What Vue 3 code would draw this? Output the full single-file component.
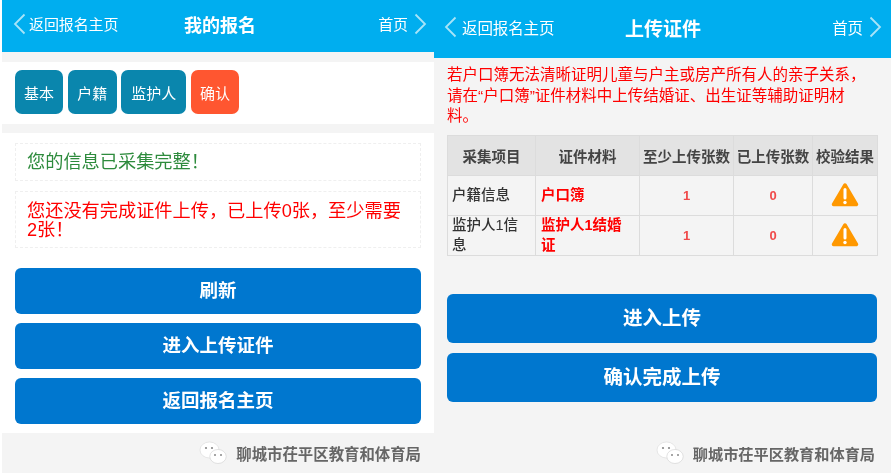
<script setup>
const tabs = [
  { label: '基本', w: 48 },
  { label: '户籍', w: 49 },
  { label: '监护人', w: 65 },
  { label: '确认', w: 48, active: true }
]
const rows = [
  { item: '户籍信息', doc: '户口簿', min: 1, done: 0 },
  { item: '监护人1信息', doc: '监护人1结婚证', min: 1, done: 0 }
]
</script>

<template>
  <div class="screen">
    <section class="panel left">
      <header class="bar bar-left">
        <div class="side">
          <svg class="chev" width="13" height="22" viewBox="0 0 13 22"><path d="M11.5 1.5 2 11l9.500 9.500" /></svg>
          <span>返回报名主页</span>
        </div>
        <h1>我的报名</h1>
        <div class="side end">
          <span>首页</span>
          <svg class="chev" width="13" height="22" viewBox="0 0 13 22"><path d="M1.500 1.500 11 11l-9.500 9.500" /></svg>
        </div>
      </header>

      <nav class="tabs">
        <span
          v-for="t in tabs"
          :key="t.label"
          class="tab"
          :class="{ active: t.active }"
          :style="{ width: t.w + 'px' }"
        >{{ t.label }}</span>
      </nav>

      <div class="content">
        <p class="note ok">您的信息已采集完整！</p>
        <p class="note warn">您还没有完成证件上传，已上传0张，至少需要2张！</p>
        <div class="actions">
          <button>刷新</button>
          <button>进入上传证件</button>
          <button>返回报名主页</button>
        </div>
      </div>

      <footer class="foot">
        <svg width="28" height="24" viewBox="0 0 28 24">
          <ellipse cx="10.500" cy="9" rx="9.500" ry="8" fill="#fff" stroke="#d8d8d8" stroke-width=".6" />
          <ellipse cx="19" cy="15.500" rx="8.200" ry="7" fill="#fff" stroke="#cfcfcf" stroke-width=".6" />
          <circle cx="7" cy="7" r="1.100" fill="#888" /><circle cx="13" cy="7" r="1.100" fill="#888" />
          <circle cx="16" cy="14" r="1" fill="#888" /><circle cx="22" cy="14" r="1" fill="#888" />
        </svg>
        <span>聊城市茌平区教育和体育局</span>
      </footer>
    </section>

    <section class="panel right">
      <header class="bar bar-right">
        <div class="side">
          <svg class="chev" width="13" height="22" viewBox="0 0 13 22"><path d="M11.500 1.500 2 11l9.500 9.500" /></svg>
          <span>返回报名主页</span>
        </div>
        <h1>上传证件</h1>
        <div class="side end">
          <span>首页</span>
          <svg class="chev" width="13" height="22" viewBox="0 0 13 22"><path d="M1.500 1.500 11 11l-9.500 9.500" /></svg>
        </div>
      </header>

      <p class="tip">若户口簿无法清晰证明儿童与户主或房产所有人的亲子关系，请在“户口簿”证件材料中上传结婚证、出生证等辅助证明材料。</p>

      <table>
        <colgroup>
          <col style="width:88px" /><col style="width:104px" /><col style="width:94px" /><col style="width:79px" /><col style="width:65px" />
        </colgroup>
        <thead>
          <tr><th>采集项目</th><th>证件材料</th><th>至少上传张数</th><th>已上传张数</th><th>校验结果</th></tr>
        </thead>
        <tbody>
          <tr v-for="r in rows" :key="r.item">
            <td class="item">{{ r.item }}</td>
            <td class="doc">{{ r.doc }}</td>
            <td class="num">{{ r.min }}</td>
            <td class="num">{{ r.done }}</td>
            <td class="icon">
              <svg width="28" height="26" viewBox="0 0 28 26">
                <path d="M14 3 25.500 22.500H2.500Z" fill="#ff9800" stroke="#ff9800" stroke-width="3.500" stroke-linejoin="round" />
                <path d="M14 7.500v8.500" stroke="#fff" stroke-width="3" stroke-linecap="round" />
                <circle cx="14" cy="20.500" r="1.700" fill="#fff" />
              </svg>
            </td>
          </tr>
        </tbody>
      </table>

      <div class="actions big">
        <button>进入上传</button>
        <button>确认完成上传</button>
      </div>

      <footer class="foot foot-right">
        <svg width="28" height="24" viewBox="0 0 28 24">
          <ellipse cx="10.500" cy="9" rx="9.500" ry="8" fill="#fff" stroke="#d8d8d8" stroke-width=".6" />
          <ellipse cx="19" cy="15.500" rx="8.200" ry="7" fill="#fff" stroke="#cfcfcf" stroke-width=".6" />
          <circle cx="7" cy="7" r="1.100" fill="#888" /><circle cx="13" cy="7" r="1.100" fill="#888" />
          <circle cx="16" cy="14" r="1" fill="#888" /><circle cx="22" cy="14" r="1" fill="#888" />
        </svg>
        <span>聊城市茌平区教育和体育局</span>
      </footer>
    </section>
  </div>
</template>

<style>
html, body { margin: 0; background: #fff; }
</style>

<style scoped>
.screen {
  width: 891px;
  height: 473px;
  display: flex;
  overflow: hidden;
  background: #fff;
  font-family: "Liberation Sans", "Noto Sans CJK SC", sans-serif;
  filter: blur(0.55px);
}
.panel {
  display: flex;
  flex-direction: column;
  background: #f4f4f4;
  height: 473px;
}
.left { width: 432px; margin-left: 2px; }
.right { width: 457px; }

.bar {
  display: grid;
  grid-template-columns: 1fr auto 1fr;
  align-items: center;
  background: #00aeef;
  color: #fff;
  flex: none;
  box-sizing: border-box;
}
.bar-left { height: 52px; padding: 0 7px 5px 11px; }
.bar-right { height: 58px; padding: 0 9px 4px 10px; }
.bar h1 { margin: 0; font-size: 18px; font-weight: 700; }
.bar-right h1 { font-size: 19px; }
.side { display: flex; align-items: center; gap: 3px; font-size: 15px; letter-spacing: -0.1px; }
.bar-right .side { font-size: 15.500px; gap: 5px; }
.side.end, .bar-right .side.end { justify-content: flex-end; gap: 6px; }
.chev path { fill: none; stroke: #a8e4f8; stroke-width: 1.800; }

.tabs {
  margin-top: 10px;
  height: 62px;
  padding: 8px 13px;
  box-sizing: border-box;
  background: #fff;
  display: flex;
  gap: 4.670px;
  flex: none;
}
.tab {
  height: 44px;
  border-radius: 7px;
  background: #0a86ad;
  color: #fff;
  font-size: 15px;
  display: flex;
  align-items: center;
  justify-content: center;
}
.tab.active { background: #ff5630; }

.content {
  margin-top: 9px;
  height: 300px;
  background: #fff;
  padding: 10px 13px 0;
  box-sizing: border-box;
  flex: none;
}
.note {
  margin: 0 0 10px;
  border: 1px dashed #efefef;
  padding: 0 11px;
  font-size: 18.200px;
  box-sizing: border-box;
}
.ok { height: 38px; color: #2e8b3d; line-height: 37px; }
.warn { height: 57px; color: #ff0000; padding-top: 10px; line-height: 18.500px; }

.actions { display: flex; flex-direction: column; gap: 9px; margin-top: 20px; }
.actions button {
  height: 46px;
  border: 0;
  border-radius: 6px;
  background: #0077cf;
  color: #fff;
  padding: 0 0 4px;
  font: 700 18.500px "Liberation Sans", "Noto Sans CJK SC", sans-serif;
}
.actions.big { margin: 38px 14px 0 13px; gap: 10px; }
.actions.big button { height: 49px; font-size: 19.500px; padding-bottom: 5px; }

.foot {
  flex: 1;
  display: flex;
  align-items: center;
  justify-content: flex-end;
  gap: 9px;
  padding: 0 13px 1px 0;
  color: #666;
  font-size: 15.400px;
  font-weight: 700;
}
.foot-right {
  flex: none;
  margin-top: 29px;
  height: 44px;
  padding-right: 16px;
  font-size: 15.200px;
}

.tip {
  margin: 7px 20px 0 13px;
  color: #ff0000;
  font-size: 15.500px;
  line-height: 20.500px;
  height: 70px;
  flex: none;
}

table {
  width: 430px;
  margin-left: 13px;
  table-layout: fixed;
  border-collapse: collapse;
  font-size: 14.500px;
  flex: none;
}
th, td { border: 1px solid #dcdcdc; padding: 0 2px; box-sizing: border-box; }
th {
  height: 40px;
  background: #e3e3e3;
  color: #444;
  font-weight: 700;
  white-space: nowrap;
}
td { height: 40px; line-height: 19.500px; }
.item { color: #333; padding: 0 8px 0 4px; font-weight: 500; }
.doc { color: #ff0000; font-weight: 700; padding: 0 12px 0 5px; }
.num { color: #f04a4a; text-align: center; font-size: 13px; font-weight: 700; }
.icon { text-align: center; padding: 0; }
.icon svg { display: block; margin: -2px auto 0; }
</style>
